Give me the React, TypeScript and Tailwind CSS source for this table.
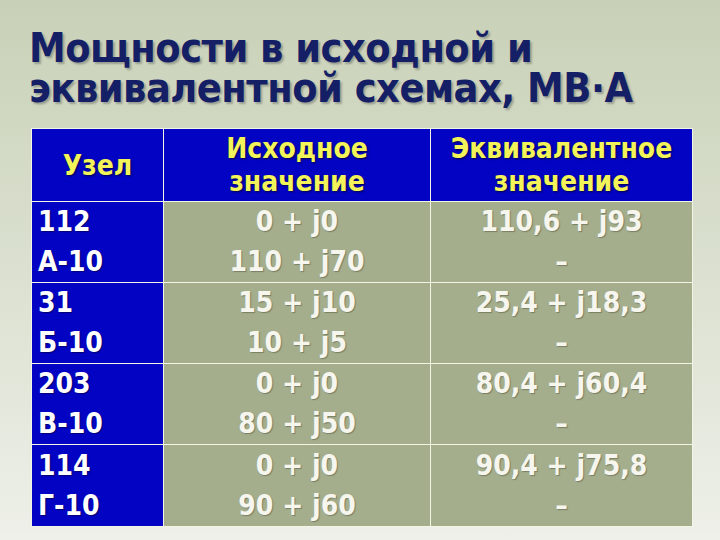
import React from "react";

const rows = [
  { node: ["112", "А-10"], src: ["0 + j0", "110 + j70"], eq: "110,6 + j93" },
  { node: ["31", "Б-10"], src: ["15 + j10", "10 + j5"], eq: "25,4 + j18,3" },
  { node: ["203", "В-10"], src: ["0 + j0", "80 + j50"], eq: "80,4 + j60,4" },
  { node: ["114", "Г-10"], src: ["0 + j0", "90 + j60"], eq: "90,4 + j75,8" },
];

export default function App() {
  return (
    <div
      className="w-[720px] h-[540px] overflow-hidden bg-gradient-to-b from-[#c8d1b7] to-[#eef0e9] flex flex-col"
      style={{ fontFamily: '"DejaVu Sans Condensed", "DejaVu Sans", sans-serif' }}
    >
      <h1 className="ml-[29px] mt-[28px] h-[80px] text-[#141f66] font-bold text-[41px] leading-[40px] tracking-[-0.5px] [text-shadow:2px_2px_2px_rgba(90,90,90,0.45)]">
        Мощности в исходной и
        <br />
        эквивалентной схемах, МВ·А
      </h1>
      <div className="ml-[31px] mt-[20px] w-[662px] border border-[#f2f4e6] grid grid-cols-[132px_267px_1fr] text-[28px] font-bold">
        <div className="h-[73px] bg-[#0303c4] border-r border-b border-[#f2f4e6] flex items-center justify-center text-[#f3f35a] leading-[33px] [text-shadow:1px_1px_2px_rgba(0,0,40,0.8)]">
          Узел
        </div>
        <div className="h-[73px] bg-[#0303c4] border-r border-b border-[#f2f4e6] flex flex-col items-center justify-center text-[#f3f35a] leading-[33px] [text-shadow:1px_1px_2px_rgba(0,0,40,0.8)]">
          <span>Исходное</span>
          <span>значение</span>
        </div>
        <div className="h-[73px] bg-[#0303c4] border-b border-[#f2f4e6] flex flex-col items-center justify-center text-[#f3f35a] leading-[33px] [text-shadow:1px_1px_2px_rgba(0,0,40,0.8)]">
          <span>Эквивалентное</span>
          <span>значение</span>
        </div>
        {rows.map((r, i) => {
          const last = i === rows.length - 1;
          return (
            <React.Fragment key={i}>
              <div
                className={`h-[81px] bg-[#0303c4] border-r border-[#f2f4e6] flex flex-col items-start justify-center pl-[6px] text-white leading-[40px] [text-shadow:1px_1px_1px_rgba(0,0,60,0.6)] ${last ? "" : "border-b"}`}
              >
                <span>{r.node[0]}</span>
                <span>{r.node[1]}</span>
              </div>
              <div
                className={`h-[81px] bg-[#a4ae8d] border-r border-[#f2f4e6] flex flex-col items-center justify-center text-[#f6f6ee] leading-[40px] [text-shadow:1px_1px_1px_rgba(80,80,60,0.5)] ${last ? "" : "border-b"}`}
              >
                <span>{r.src[0]}</span>
                <span>{r.src[1]}</span>
              </div>
              <div
                className={`h-[81px] bg-[#a4ae8d] border-[#f2f4e6] flex flex-col items-center justify-center text-[#f6f6ee] leading-[40px] [text-shadow:1px_1px_1px_rgba(80,80,60,0.5)] ${last ? "" : "border-b"}`}
              >
                <span>{r.eq}</span>
                <span>–</span>
              </div>
            </React.Fragment>
          );
        })}
      </div>
    </div>
  );
}
